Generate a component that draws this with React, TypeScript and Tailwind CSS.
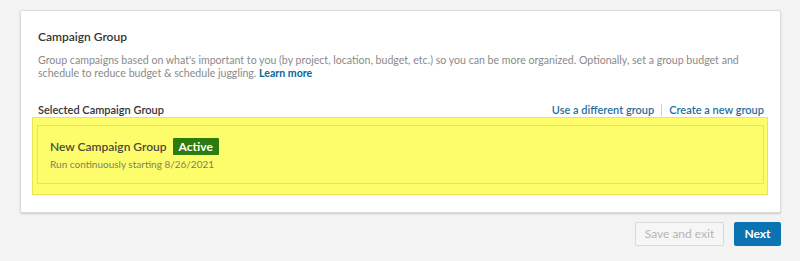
export default function App() {
  return (
    <div
      className="w-[800px] h-[261px] bg-[#f3f3f4] pt-[10px] pl-[20px] pr-[19px]"
      style={{ fontFamily: 'Lato, "Open Sans", sans-serif' }}
    >
      <div className="bg-white border border-[#dcdcdc] shadow-[0_1px_2px_rgba(0,0,0,0.18)] rounded-[2px] pl-[17px] pr-[16px] pt-[18px] pb-[17px]">
        <h2 className="text-[12px] leading-[15px] font-semibold text-[#333]">
          Campaign Group
        </h2>
        <p className="mt-[10px] text-[10.6px] leading-[13px] text-[#8a8a8a]">
          Group campaigns based on what's important to you (by project, location, budget, etc.) so you can be more organized. Optionally, set a group budget and schedule to reduce budget &amp; schedule juggling.{" "}
          <a className="font-bold text-[#0a66a0]">Learn more</a>
        </p>

        <div className="mt-[23px] flex items-end justify-between text-[11px] leading-[14px] font-semibold">
          <span className="text-[#333]">Selected Campaign Group</span>
          <div className="flex items-center text-[#1f6f9e]">
            <a>Use a different group</a>
            <span className="mx-[7px] h-[12px] w-px bg-[#d0d0d0]" />
            <a>Create a new group</a>
          </div>
        </div>

        <div className="-ml-[6px] -mr-[4px] bg-[#fdfd6c] border border-[#ebe556] pl-[4px] pr-[3px] pt-[7px] pb-[10px]">
          <div className="border border-[#e6e35e] pl-[12px] pt-[12px] pb-[12px]">
            <div className="flex items-center">
              <span className="text-[12px] leading-[17px] font-semibold text-[#4b4b3a]">
                New Campaign Group
              </span>
              <span className="ml-[6px] bg-[#2d7a0f] text-white text-[12px] leading-[17px] font-bold px-[6px] rounded-[1px]">
                Active
              </span>
            </div>
            <p className="mt-[3px] text-[10px] leading-[13px] text-[#7f7f5c]">
              Run continuously starting 8/26/2021
            </p>
          </div>
        </div>
      </div>

      <div className="mt-[9px] flex justify-end gap-[10px]">
        <button className="h-[24px] w-[89px] border border-[#d8d8d8] rounded-[2px] bg-[#f6f6f6] text-[12px] text-[#b5b5b5]">
          Save and exit
        </button>
        <button className="h-[24px] w-[47px] rounded-[2px] bg-[#0a73b1] text-[12px] font-bold text-white">
          Next
        </button>
      </div>
    </div>
  );
}
